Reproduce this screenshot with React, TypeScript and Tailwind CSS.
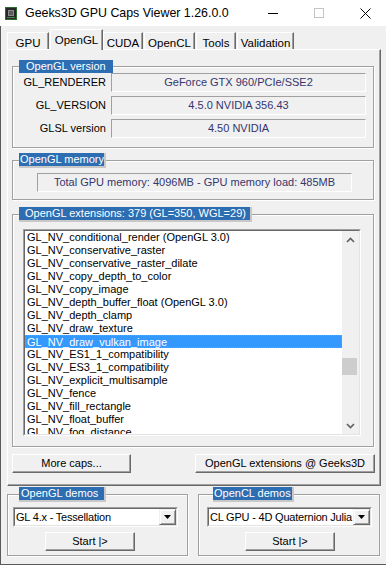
// GPU Caps Viewer – OpenGL tab (classic Win32 look)

const EXTENSIONS = [
  'GL_NV_conditional_render (OpenGL 3.0)',
  'GL_NV_conservative_raster',
  'GL_NV_conservative_raster_dilate',
  'GL_NV_copy_depth_to_color',
  'GL_NV_copy_image',
  'GL_NV_depth_buffer_float (OpenGL 3.0)',
  'GL_NV_depth_clamp',
  'GL_NV_draw_texture',
  'GL_NV_draw_vulkan_image',
  'GL_NV_ES1_1_compatibility',
  'GL_NV_ES3_1_compatibility',
  'GL_NV_explicit_multisample',
  'GL_NV_fence',
  'GL_NV_fill_rectangle',
  'GL_NV_float_buffer',
  'GL_NV_fog_distance',
];

const SELECTED = 'GL_NV_draw_vulkan_image';

const TABS = [
  { label: 'GPU', cls: 'w-[42px]' },
  { label: 'OpenGL', cls: 'w-[53px] ml-px', active: true },
  { label: 'CUDA', cls: 'w-[40px]' },
  { label: 'OpenCL', cls: 'w-[51px] ml-px' },
  { label: 'Tools', cls: 'w-[40px] ml-px' },
  { label: 'Validation', cls: 'w-[57px] ml-px' },
];

// ===========================================
// SMALL PIECES
// ===========================================

function AppIcon() {
  return (
    <svg width="12" height="13" viewBox="0 0 12 13">
      <rect x="0" y="0" width="12" height="13" fill="#2d6a2f" />
      <rect x="1" y="1" width="10" height="11" fill="#262626" />
      <rect x="3" y="3" width="6" height="6" fill="#8c8c8c" />
      <rect x="4" y="4" width="4" height="4" fill="#5a5a5a" />
      <rect x="2" y="10" width="8" height="1" fill="#4a8a4c" />
    </svg>
  );
}

function TitleBar() {
  return (
    <div className="h-[26px] bg-white flex items-center shrink-0">
      <div className="ml-[5px]">
        <AppIcon />
      </div>
      <span className="ml-[8px] text-[12.4px] text-black">
        Geeks3D GPU Caps Viewer 1.26.0.0
      </span>
      <div className="ml-auto mr-[-2px] flex items-center">
        <div className="w-[46px] flex justify-center">
          <div className="w-[10px] h-px bg-black" />
        </div>
        <div className="w-[46px] flex justify-center">
          <div className="w-[10px] h-[10px] border border-[#c4c4c4]" />
        </div>
        <div className="w-[46px] flex justify-center">
          <svg width="11" height="11" viewBox="0 0 11 11">
            <path d="M0.5 0.5 L10.5 10.5 M10.5 0.5 L0.5 10.5" stroke="#000" strokeWidth="1" />
          </svg>
        </div>
      </div>
    </div>
  );
}

function Chevron({ up }: { up?: boolean }) {
  return (
    <svg width="9" height="6" viewBox="0 0 9 6">
      <path
        d={up ? 'M1 5 L4.5 1.5 L8 5' : 'M1 1 L4.5 4.5 L8 1'}
        fill="none"
        stroke="#606060"
        strokeWidth="1.6"
      />
    </svg>
  );
}

interface LegendProps {
  children: React.ReactNode;
  className?: string;
}

/** Blue highlighted group title */
function Legend({ children, className = '' }: LegendProps) {
  return (
    <legend
      className={`h-[13px] leading-[13px] bg-[#2d6db2] text-white text-[11px] whitespace-pre ${className}`}
    >
      {children}
    </legend>
  );
}

const GROUP =
  'border border-[#a0a0a0] shadow-[inset_1px_1px_0_#fff,1px_1px_0_#fff] min-w-0';

const RAISED =
  'bg-[#f0f0f0] border border-t-white border-l-white border-r-[#696969] border-b-[#696969] shadow-[inset_-1px_-1px_0_#a0a0a0] flex items-center justify-center text-[11px] text-black';

const SUNKEN_FIELD =
  'border border-t-[#a0a0a0] border-l-[#a0a0a0] border-r-white border-b-white flex items-center justify-center text-[11px] text-[#35356e]';

function InfoRow({ label, value }: { label: string; value: string }) {
  return (
    <div className="flex items-center h-[19px]">
      <div className="w-[93px] text-right text-[11px] text-black">{label}</div>
      <div className={`ml-[5px] w-[255px] h-[19px] ${SUNKEN_FIELD}`}>{value}</div>
    </div>
  );
}

function Combo({ value }: { value: string }) {
  return (
    <div className="w-[165px] h-[20px] border border-t-[#a0a0a0] border-l-[#a0a0a0] border-r-white border-b-white">
      <div className="h-full border border-t-[#696969] border-l-[#696969] border-r-[#e3e3e3] border-b-[#e3e3e3] bg-white flex items-center">
        <span className="flex-1 pl-[1px] text-[11px] text-black whitespace-nowrap overflow-hidden tracking-[-0.2px]">
          {value}
        </span>
        <div className="w-[17px] h-[16px] bg-[#f0f0f0] border border-t-[#f0f0f0] border-l-[#f0f0f0] border-r-[#696969] border-b-[#696969] shadow-[inset_1px_1px_0_#fff,inset_-1px_-1px_0_#a0a0a0] flex items-center justify-center shrink-0">
          <svg width="7" height="4" viewBox="0 0 7 4">
            <path d="M0 0 H7 L3.5 4 Z" fill="#000" />
          </svg>
        </div>
      </div>
    </div>
  );
}

// ===========================================
// APP
// ===========================================

export default function App() {
  return (
    <div className="w-[386px] h-[565px] bg-[#f0f0f0] flex flex-col overflow-hidden font-['Liberation_Sans',Arial,sans-serif] text-[11px] text-black">
      <TitleBar />

      <div className="flex-1 flex flex-col border-l border-b border-[#5a5a5a]">
        {/* Tabs */}
        <div className="h-[23px] flex items-end pl-[6px] shrink-0">
          {TABS.map((t) =>
            t.active ? (
              <div
                key={t.label}
                className={`${t.cls} h-[21px] -mb-px relative z-10 bg-[#f0f0f0] border-t border-l border-r border-t-white border-l-white border-r-[#696969] shadow-[inset_-1px_0_0_#a0a0a0] rounded-tl-[2px] flex justify-center pt-[2px] text-[11.5px]`}
              >
                {t.label}
              </div>
            ) : (
              <div
                key={t.label}
                className={`${t.cls} h-[17px] bg-[#f0f0f0] border-t border-l border-r border-t-white border-l-white border-r-[#696969] shadow-[inset_-1px_0_0_#a0a0a0] rounded-tl-[2px] flex justify-center pt-[2px] text-[11.5px]`}
              >
                {t.label}
              </div>
            ),
          )}
        </div>

        {/* Tab panel */}
        <div className="ml-[6px] mr-[5px] h-[437px] shrink-0 border border-t-white border-l-white border-r-[#696969] border-b-[#696969] shadow-[inset_-1px_-1px_0_#a0a0a0] pt-[10px] pl-[4px]">
          <fieldset className={`w-[362px] pb-[9px] ${GROUP}`}>
            <Legend className="ml-[6px] px-[7px]">OpenGL version</Legend>
            <div className="flex flex-col gap-[4px]">
              <InfoRow label="GL_RENDERER" value="GeForce GTX 960/PCIe/SSE2" />
              <InfoRow label="GL_VERSION" value="4.5.0 NVIDIA 356.43" />
              <InfoRow label="GLSL version" value="4.50 NVIDIA" />
            </div>
          </fieldset>

          <fieldset className={`w-[362px] mt-[5px] pt-[5px] pb-[7px] ${GROUP}`}>
            <Legend className="ml-[6px] pl-[1px] border-r-2 border-b-2 border-[#c8c8c8] box-content">
              OpenGL memory
            </Legend>
            <div className={`ml-[24px] w-[315px] h-[19px] ${SUNKEN_FIELD}`}>
              Total GPU memory: 4096MB - GPU memory load: 485MB
            </div>
          </fieldset>

          <fieldset className={`w-[362px] mt-[7px] pt-[7px] pb-[10px] ${GROUP}`}>
            <Legend className="ml-[6px] pl-[6px] pr-[4px] border-r-2 border-b-2 border-[#c8c8c8] box-content">
              OpenGL extensions: 379 (GL=350, WGL=29)
            </Legend>
            <div className="ml-[10px] w-[338px] h-[207px] border border-t-[#a0a0a0] border-l-[#a0a0a0] border-r-white border-b-white">
              <div className="h-full border border-t-[#696969] border-l-[#696969] border-r-[#e3e3e3] border-b-[#e3e3e3] bg-white flex">
                <div className="flex-1 overflow-hidden">
                  {EXTENSIONS.map((ext) =>
                    ext === SELECTED ? (
                      <div
                        key={ext}
                        className="h-[13px] leading-[12px] pl-[1px] bg-[#3399ff] text-white border border-dotted border-[#e08a30] whitespace-nowrap"
                      >
                        {ext}
                      </div>
                    ) : (
                      <div key={ext} className="h-[13px] leading-[13px] pl-[2px] whitespace-nowrap">
                        {ext}
                      </div>
                    ),
                  )}
                </div>
                <div className="w-[17px] bg-[#f0f0f0] flex flex-col shrink-0">
                  <div className="h-[17px] flex items-center justify-center">
                    <Chevron up />
                  </div>
                  <div className="flex-1">
                    <div className="mt-[110px] h-[17px] w-[15px] bg-[#cdcdcd]" />
                  </div>
                  <div className="h-[17px] flex items-center justify-center">
                    <Chevron />
                  </div>
                </div>
              </div>
            </div>
          </fieldset>

          <div className="mt-[7px] flex w-[363px]">
            <div className={`w-[119px] h-[19px] ${RAISED}`}>More caps...</div>
            <div className={`ml-auto w-[180px] h-[19px] ${RAISED}`}>OpenGL extensions @ Geeks3D</div>
          </div>
        </div>

        {/* Demos */}
        <div className="flex ml-[6px] mt-px gap-[10px]">
          <fieldset className={`w-[181px] pt-[5px] pb-[4px] pl-[5px] ${GROUP}`}>
            <Legend className="ml-[6px] pl-[2px] pr-[6px] border-r-2 border-b-2 border-[#c8c8c8] box-content">
              OpenGL demos
            </Legend>
            <Combo value="GL 4.x - Tessellation" />
            <div className={`mt-[5px] ml-[32px] w-[90px] h-[19px] ${RAISED}`}>Start |&gt;</div>
          </fieldset>

          <fieldset className={`w-[182px] pt-[5px] pb-[4px] pl-[8px] ${GROUP}`}>
            <Legend className="ml-[6px] px-px border-r-2 border-b-2 border-[#c8c8c8] box-content">
              OpenCL demos
            </Legend>
            <Combo value="CL GPU - 4D Quaternion Julia" />
            <div className={`mt-[5px] ml-[38px] w-[90px] h-[19px] ${RAISED}`}>Start |&gt;</div>
          </fieldset>
        </div>
      </div>
    </div>
  );
}
